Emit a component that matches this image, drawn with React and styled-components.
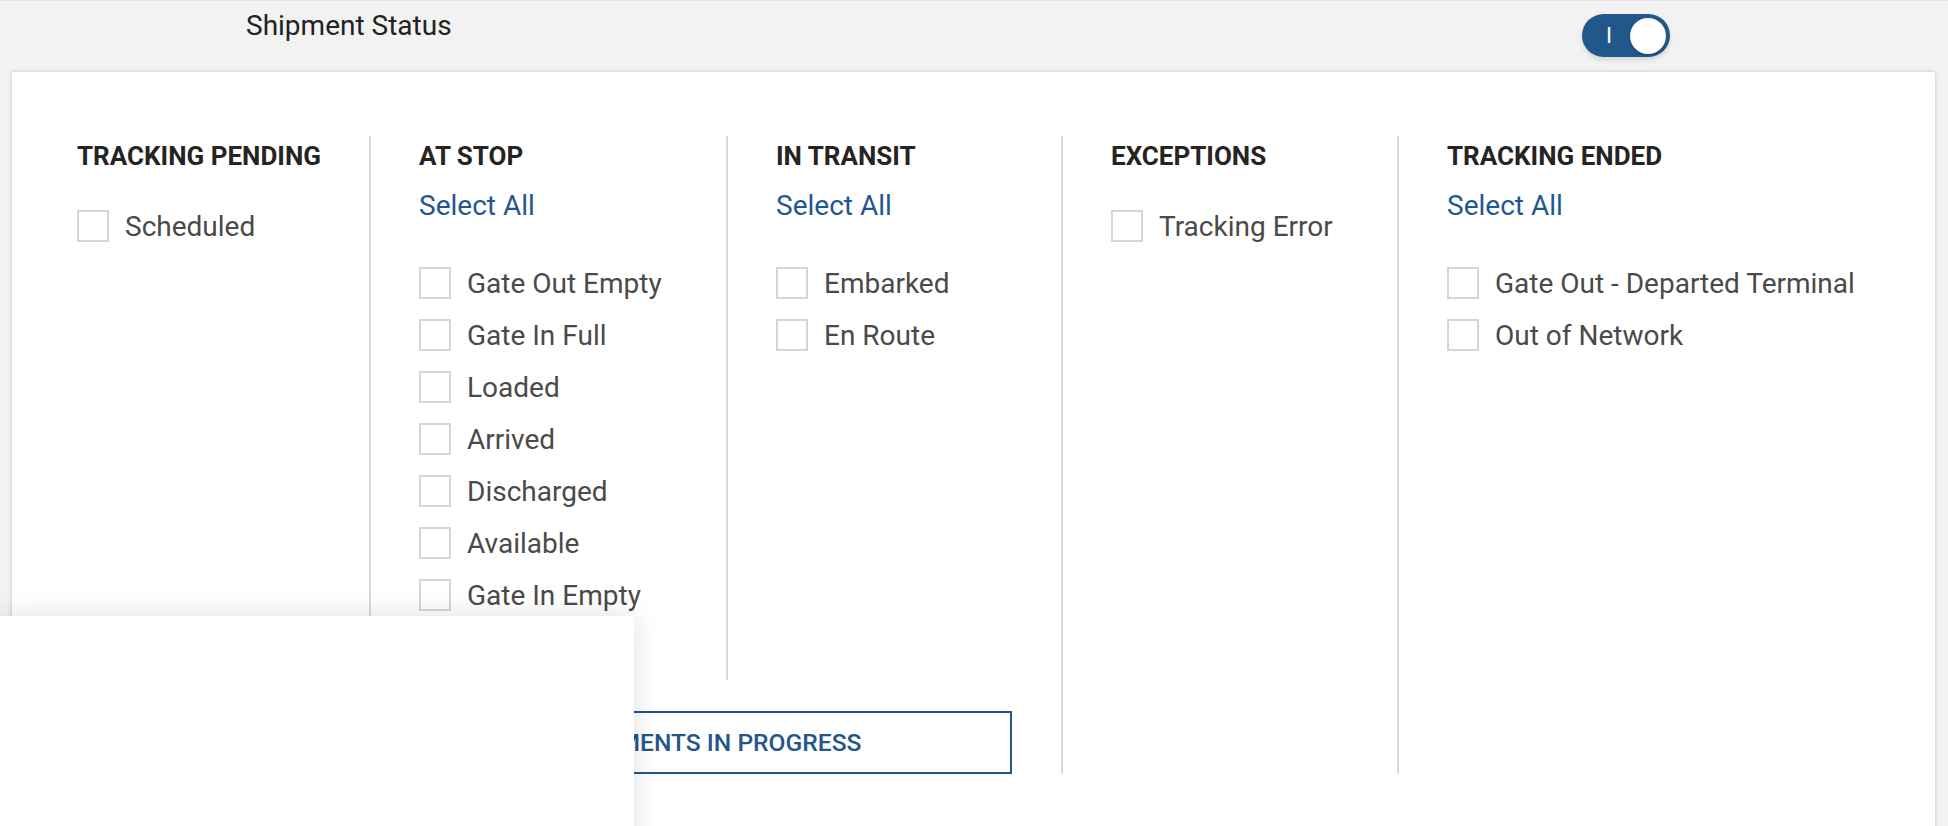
import React from 'react';
import styled, { createGlobalStyle } from 'styled-components';

const GlobalStyle = createGlobalStyle`
  html, body {
    margin: 0;
    padding: 0;
    overflow: hidden;
    background: #f2f2f2;
    font-family: Roboto, "Liberation Sans", Arial, sans-serif;
  }
`;

const Page = styled.div`
  position: relative;
  height: 826px;
  overflow: hidden;
`;

const TopBar = styled.div`
  display: flex;
  align-items: flex-start;
  justify-content: space-between;
  height: 71px;
  padding: 0 278px 0 246px;
  border-top: 1px solid #e6e6e6;
`;

const Title = styled.div`
  margin-top: 8px;
  font-size: 28px;
  line-height: 34px;
  color: #222;
`;

const Toggle = styled.button`
  display: flex;
  align-items: center;
  justify-content: space-between;
  width: 88px;
  height: 43px;
  margin-top: 13px;
  padding: 0 4px 0 24px;
  border: none;
  border-radius: 22px;
  background: #22578b;
  box-shadow: 0 3px 5px rgba(0, 0, 0, 0.12);
  cursor: pointer;
`;

const ToggleMark = styled.span`
  color: #fff;
  font-family: Roboto, sans-serif;
  font-size: 22px;
  font-weight: 400;
  line-height: 1;
`;

const Knob = styled.span`
  width: 36px;
  height: 36px;
  border-radius: 50%;
  background: #fff;
  box-shadow: 0 1px 3px rgba(0, 0, 0, 0.25);
`;

const Card = styled.div`
  background: #fff;
  margin: 0 13px 0 12px;
  padding: 64px 0 120px 65px;
  box-shadow: 0 0 4px rgba(0, 0, 0, 0.2);
`;

const Filters = styled.div`
  display: flex;
  align-items: stretch;
`;

const LeftGroup = styled.div`
  display: flex;
  flex-direction: column;
  width: 984px;
`;

const GroupRow = styled.div`
  display: flex;
  min-height: 544px;
`;

const Column = styled.div`
  box-sizing: border-box;
  width: ${(p) => (p.$width ? `${p.$width}px` : 'auto')};
  flex: ${(p) => (p.$width ? 'none' : '1')};
  border-left: ${(p) => (p.$first ? 'none' : '2px solid #d9d9d9')};
  padding-left: ${(p) => (p.$first ? 0 : 48)}px;
`;

const Heading = styled.div`
  margin-top: 5px;
  font-size: 26px;
  line-height: 30px;
  font-weight: 700;
  color: #262422;
  text-transform: uppercase;
  white-space: nowrap;
`;

const SelectAll = styled.a`
  display: block;
  margin-top: 18px;
  font-size: 28px;
  line-height: 34px;
  color: #1f5792;
  text-decoration: none;
  cursor: pointer;
`;

const List = styled.div`
  display: flex;
  flex-direction: column;
  margin-top: ${(p) => (p.$afterLink ? 34 : 29)}px;
`;

const Row = styled.label`
  display: flex;
  align-items: center;
  gap: 16px;
  height: 52px;
  font-size: 28px;
  color: #4a4a4a;
  white-space: nowrap;
  cursor: pointer;
`;

const Box = styled.input`
  appearance: none;
  box-sizing: border-box;
  width: 32px;
  height: 32px;
  margin: 0;
  border: 2px solid #d6d6d6;
  background: #fff;
  flex: none;
`;

const ShowButton = styled.button`
  box-sizing: border-box;
  width: 599px;
  height: 63px;
  margin: 31px 0 0 336px;
  border: 2px solid #23568a;
  background: #fff;
  color: #23568a;
  font-family: Roboto, sans-serif;
  font-size: 24.6px;
  font-weight: 500;
  text-transform: uppercase;
  cursor: pointer;
`;

const Overlay = styled.div`
  position: absolute;
  left: 0;
  top: 616px;
  width: 634px;
  height: 240px;
  background: #fff;
  box-shadow: 0 0 26px rgba(0, 0, 0, 0.13);
`;

const groups = [
  { title: 'Tracking Pending', width: 292, first: true, items: ['Scheduled'] },
  {
    title: 'At Stop',
    width: 357,
    selectAll: true,
    items: ['Gate Out Empty', 'Gate In Full', 'Loaded', 'Arrived', 'Discharged', 'Available', 'Gate In Empty'],
  },
  { title: 'In Transit', width: 335, selectAll: true, items: ['Embarked', 'En Route'] },
];

const rightGroups = [
  { title: 'Exceptions', width: 336, items: ['Tracking Error'] },
  { title: 'Tracking Ended', selectAll: true, items: ['Gate Out - Departed Terminal', 'Out of Network'] },
];

function StatusColumn({ group }) {
  return (
    <Column $width={group.width} $first={group.first}>
      <Heading>{group.title}</Heading>
      {group.selectAll && <SelectAll>Select All</SelectAll>}
      <List $afterLink={group.selectAll}>
        {group.items.map((item) => (
          <Row key={item}>
            <Box type="checkbox" />
            {item}
          </Row>
        ))}
      </List>
    </Column>
  );
}

export default function App() {
  return (
    <Page>
      <GlobalStyle />
      <TopBar>
        <Title>Shipment Status</Title>
        <Toggle aria-label="Shipment status on">
          <ToggleMark>I</ToggleMark>
          <Knob />
        </Toggle>
      </TopBar>
      <Card>
        <Filters>
          <LeftGroup>
            <GroupRow>
              {groups.map((g) => (
                <StatusColumn key={g.title} group={g} />
              ))}
            </GroupRow>
            <ShowButton>Shipments in progress</ShowButton>
          </LeftGroup>
          {rightGroups.map((g) => (
            <StatusColumn key={g.title} group={g} />
          ))}
        </Filters>
      </Card>
      <Overlay />
    </Page>
  );
}
